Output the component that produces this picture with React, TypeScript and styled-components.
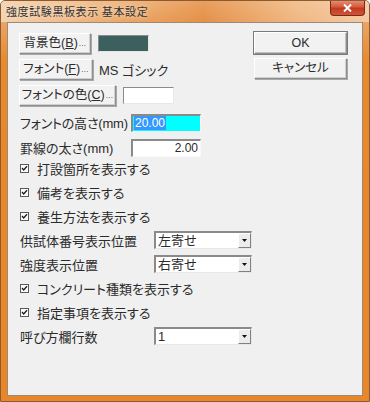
import React from 'react';
import styled, { createGlobalStyle } from 'styled-components';

const GlobalStyle = createGlobalStyle`
    html, body {
        margin: 0;
        padding: 0;
        background: #ffffff;
    }
    body {
        font-family: "Liberation Sans", "Noto Sans CJK JP", sans-serif;
        font-feature-settings: "palt";
    }
`

const Window = styled.div`
    width: 370px;
    height: 402px;
    box-sizing: border-box;
    display: flex;
    flex-direction: column;
    border: 1px solid #8c5a2c;
    border-radius: 5px 5px 0 0;
    background: linear-gradient(to bottom, #f1c9a0 0px, #eaa463 22px, #e8892c 60px, #e8862a 100%);
    overflow: hidden;
`

const TitleBar = styled.div`
    height: 21px;
    display: flex;
    align-items: flex-start;
    padding-left: 5px;
    background: linear-gradient(to right, rgba(245, 215, 185, 0.9) 0%, rgba(236, 160, 90, 0.4) 35%, rgba(226, 130, 50, 0.6) 55%, rgba(242, 190, 140, 0.7) 80%, rgba(245, 210, 180, 0.8) 100%);
`

const Title = styled.span`
    margin-top: 4px;
    font-family: "Noto Sans CJK JP", sans-serif;
    font-size: 11px;
    line-height: 13px;
    color: #333333;
    letter-spacing: 0.6px;
    font-feature-settings: normal;
    text-shadow: 0 0 4px rgba(255, 240, 225, 0.9);
`

const CloseButton = styled.div`
    margin-left: auto;
    margin-right: 4px;
    margin-top: -1px;
    width: 35px;
    height: 16px;
    box-sizing: border-box;
    border: 1px solid #7a2818;
    border-top: none;
    border-radius: 0 0 4px 4px;
    background: linear-gradient(to bottom, #e8957c 0%, #d6593e 45%, #c23a1c 55%, #d0553a 100%);
    display: flex;
    align-items: center;
    justify-content: center;
`

const Client = styled.div`
    flex: 1;
    margin: 0 6px 5px 6px;
    border: 1px solid #9b8a7a;
    background: #f0f0f0;
    padding: 9px 15px 0 11px;
    display: flex;
    flex-direction: column;
    font-size: 13px;
    color: #2b2b2b;
`

const TopArea = styled.div`
    display: flex;
    justify-content: space-between;
    align-items: flex-start;
`

const LeftColumn = styled.div`
    display: flex;
    flex-direction: column;
    gap: 5px;
    margin-top: 1px;
`

const RightColumn = styled.div`
    display: flex;
    flex-direction: column;
    gap: 4px;
`

const ButtonRow = styled.div`
    display: flex;
    align-items: center;
    gap: 7px;
    height: 21px;
`

const PushButton = styled.div<{ $w: number; $default?: boolean }>`
    width: ${p => p.$w}px;
    height: ${p => (p.$default ? 22 : 21)}px;
    box-sizing: border-box;
    background: #f2f2f2;
    border: 1px solid;
    border-color: #ffffff #8e8e8e #8e8e8e #ffffff;
    box-shadow: ${p => (p.$default
        ? '0 0 0 1px #7a7a7a, inset -1px -1px 0 #c0c0c0'
        : '1px 1px 0 #a8a8a8, inset -1px -1px 0 #d0d0d0')};
    display: flex;
    align-items: center;
    justify-content: center;
    font-size: 12.5px;
    line-height: 1;
    white-space: nowrap;
    color: #2b2b2b;
`

const Mnemonic = styled.span`
    text-decoration: underline;
    text-underline-offset: 1px;
`

const Dots = styled.span`
    font-size: 8px;
    letter-spacing: 0.3px;
    align-self: flex-end;
    margin-bottom: 5px;
    margin-left: 1px;
`

const Swatch = styled.div<{ $color: string; $w: number }>`
    width: ${p => p.$w}px;
    height: 17px;
    box-sizing: border-box;
    background: ${p => p.$color};
    border: 1px solid;
    border-color: #8c8c8c #e8e8e8 #e8e8e8 #8c8c8c;
`

const FontName = styled.span`
    font-size: 13px;
    margin-left: -1px;
`

const FieldRow = styled.div<{ $top: number }>`
    display: grid;
    grid-template-columns: 112px 70px;
    align-items: center;
    height: 18px;
    margin-top: ${p => p.$top}px;
`

const Label = styled.span<{ $tight?: boolean }>`
    padding-left: 1px;
    white-space: nowrap;
    font-size: 13px;
    letter-spacing: ${p => (p.$tight ? '-0.2px' : '0')};
`

const TextField = styled.div<{ $bg: string; $align: string }>`
    height: 18px;
    box-sizing: border-box;
    background: ${p => p.$bg};
    border-top: 2px solid #8a8a8a;
    border-left: 2px solid #8a8a8a;
    border-right: 1px solid #f8f8f8;
    border-bottom: 1px solid #f8f8f8;
    display: flex;
    align-items: center;
    justify-content: ${p => p.$align};
    padding: 0 2px 0 1px;
    font-size: 12px;
`

const Selected = styled.span`
    background: #3399ff;
    color: #ffffff;
    padding: 0 1px;
    line-height: 14px;
`

const CheckRow = styled.div`
    display: flex;
    align-items: center;
    gap: 7px;
    height: 24px;
    padding-left: 1px;
`

const SelectRow = styled.div`
    display: grid;
    grid-template-columns: 135px 98px;
    align-items: center;
    height: 24px;
`

const SelectBox = styled.div`
    height: 18px;
    box-sizing: border-box;
    background: #ffffff;
    border-top: 2px solid #8a8a8a;
    border-left: 2px solid #8a8a8a;
    border-right: 1px solid #e8e8e8;
    border-bottom: 1px solid #e8e8e8;
    display: flex;
    align-items: stretch;
`

const SelectText = styled.span`
    flex: 1;
    padding-left: 2px;
    font-size: 13px;
    line-height: 15px;
    white-space: nowrap;
`

const ArrowButton = styled.div`
    width: 13px;
    box-sizing: border-box;
    background: #ececec;
    border: 1px solid;
    border-color: #ffffff #808080 #808080 #ffffff;
    display: flex;
    align-items: center;
    justify-content: center;
`

function CheckMark() {
    return (
        <svg width="9" height="9" viewBox="0 0 9 9">
            <rect x="0.5" y="0.5" width="8" height="8" fill="#ffffff" stroke="#5a5a5a" />
            <path d="M2 4 L3.7 6 L7 2.2" fill="none" stroke="#1a1a1a" strokeWidth="1.3" />
        </svg>
    );
}

function DownArrow() {
    return (
        <svg width="5" height="3" viewBox="0 0 5 3">
            <path d="M0 0 H5 L2.5 3 Z" fill="#111111" />
        </svg>
    );
}

function Check({ text }: { text: string }) {
    return (
        <CheckRow>
            <CheckMark />
            <Label>{text}</Label>
        </CheckRow>
    );
}

function Combo({ label, value }: { label: string; value: string }) {
    return (
        <SelectRow>
            <Label>{label}</Label>
            <SelectBox>
                <SelectText>{value}</SelectText>
                <ArrowButton>
                    <DownArrow />
                </ArrowButton>
            </SelectBox>
        </SelectRow>
    );
}

function App() {
    return (
        <>
            <GlobalStyle />
            <Window>
                <TitleBar>
                    <Title>強度試験黒板表示 基本設定</Title>
                    <CloseButton>
                        <svg width="9" height="8" viewBox="0 0 9 8">
                            <path d="M1 0.5 L8 7.5 M8 0.5 L1 7.5" stroke="#ffffff" strokeWidth="2" />
                        </svg>
                    </CloseButton>
                </TitleBar>
                <Client>
                    <TopArea>
                        <LeftColumn>
                            <ButtonRow>
                                <PushButton $w={72}>背景色(<Mnemonic>B</Mnemonic>)<Dots>...</Dots></PushButton>
                                <Swatch $color="#3c605d" $w={51} />
                            </ButtonRow>
                            <ButtonRow>
                                <PushButton $w={74}>フォント(<Mnemonic>F</Mnemonic>)<Dots>...</Dots></PushButton>
                                <FontName>MS ゴシック</FontName>
                            </ButtonRow>
                            <ButtonRow>
                                <PushButton $w={97}>フォントの色(<Mnemonic>C</Mnemonic>)<Dots>...</Dots></PushButton>
                                <Swatch $color="#ffffff" $w={51} />
                            </ButtonRow>
                        </LeftColumn>
                        <RightColumn>
                            <PushButton $w={93} $default>OK</PushButton>
                            <PushButton $w={93}>キャンセル</PushButton>
                        </RightColumn>
                    </TopArea>
                    <FieldRow $top={7}>
                        <Label $tight>フォントの高さ(mm)</Label>
                        <TextField $bg="#00ffff" $align="flex-start">
                            <Selected>20.00</Selected>
                        </TextField>
                    </FieldRow>
                    <FieldRow $top={7}>
                        <Label>罫線の太さ(mm)</Label>
                        <TextField $bg="#ffffff" $align="flex-end">2.00</TextField>
                    </FieldRow>
                    <Check text="打設箇所を表示する" />
                    <Check text="備考を表示する" />
                    <Check text="養生方法を表示する" />
                    <Combo label="供試体番号表示位置" value="左寄せ" />
                    <Combo label="強度表示位置" value="右寄せ" />
                    <Check text="コンクリート種類を表示する" />
                    <Check text="指定事項を表示する" />
                    <Combo label="呼び方欄行数" value="1" />
                </Client>
            </Window>
        </>
    );
}

export default App;
